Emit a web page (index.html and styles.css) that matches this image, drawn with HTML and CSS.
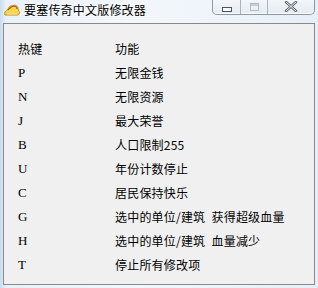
FILE: index.html
```html
<!DOCTYPE html>
<html lang="zh-CN">
<head>
  <meta charset="UTF-8">
  <title>要塞传奇中文版修改器</title>
  <link rel="stylesheet" href="styles.css">
</head>
<body>
  <div class="window">
    <div class="titlebar">
      <svg class="app-icon" width="18" height="15" viewBox="0 0 18 15">
        <path d="M2 13 C1 10 3 8 5 8 C5 5 8 3 10 4 C12 2 16 4 15 8 C17 9 17 12 15 13 Z" fill="#f6d64a" stroke="#c58a1e" stroke-width="1"/>
        <path d="M5 8 C6 6 9 5 10 4 C12 4 14 5 14 7" fill="none" stroke="#b0561a" stroke-width="1.2"/>
        <path d="M4 12 L14 12" stroke="#fbe9a0" stroke-width="1"/>
      </svg>
      <div class="title">要塞传奇中文版修改器</div>
      <div class="caption-buttons">
        <div class="cbtn min"><span class="min-glyph"></span></div>
        <div class="cbtn max"><span class="max-glyph"></span></div>
        <div class="cbtn close">
          <svg width="14" height="11" viewBox="0 0 14 11">
            <path d="M2 1 L12 10 M12 1 L2 10" fill="none" stroke="#5f6a75" stroke-width="2.6" stroke-linecap="round"/>
            <path d="M2 1 L12 10 M12 1 L2 10" fill="none" stroke="#eef2f6" stroke-width="1" stroke-linecap="round"/>
          </svg>
        </div>
      </div>
    </div>

    <div class="client">
      <div class="hotkeys">
        <div class="key head">热键</div><div class="desc head">功能</div>
        <div class="key">P</div><div class="desc">无限金钱</div>
        <div class="key">N</div><div class="desc">无限资源</div>
        <div class="key">J</div><div class="desc">最大荣誉</div>
        <div class="key">B</div><div class="desc">人口限制255</div>
        <div class="key">U</div><div class="desc">年份计数停止</div>
        <div class="key">C</div><div class="desc">居民保持快乐</div>
        <div class="key">G</div><div class="desc">选中的单位/建筑&ensp;获得超级血量</div>
        <div class="key">H</div><div class="desc">选中的单位/建筑&ensp;血量减少</div>
        <div class="key">T</div><div class="desc">停止所有修改项</div>
      </div>
    </div>
  </div>
</body>
</html>
```

FILE: styles.css
```css
html, body {
  margin: 0;
  padding: 0;
}

body {
  width: 318px;
  height: 288px;
  overflow: hidden;
  font-family: "Noto Sans CJK SC", "Noto Sans", sans-serif;
  color: #000;
  background: linear-gradient(90deg, #c9dcef 0px, #e9f1f9 6px, #f3f7fb 40%, #eef4fa 70%, #e6eef7 100%);
}

.window {
  height: 288px;
  display: flex;
  flex-direction: column;
}

.titlebar {
  height: 23px;
  display: flex;
  align-items: flex-start;
}

.app-icon {
  margin: 2px 0 0 3px;
  flex: none;
}

.title {
  margin-left: 3px;
  font-size: 12px;
  line-height: 19px;
  letter-spacing: 0.2px;
  text-shadow: 0 0 6px #fff, 0 0 3px #fff;
}

.caption-buttons {
  margin-left: auto;
  margin-right: 3px;
  display: flex;
  height: 15px;
  margin-top: -1px;
  border: 1px solid #8d99a6;
  border-top: none;
  border-radius: 0 0 5px 5px;
  background: linear-gradient(#f4f7fa, #e4ebf2);
  box-shadow: inset 0 -1px 0 #ffffff;
}

.cbtn {
  height: 15px;
  display: flex;
  align-items: center;
  justify-content: center;
}

.cbtn.min {
  width: 27px;
  border-right: 1px solid #a9b3be;
}

.cbtn.max {
  width: 26px;
  border-right: 1px solid #a9b3be;
}

.cbtn.close {
  width: 46px;
}

.min-glyph {
  width: 8px;
  height: 3px;
  margin-top: 6px;
  border: 1px solid #4d5560;
  background: #fff;
}

.max-glyph {
  width: 7px;
  height: 6px;
  border: 1px solid #b4bcc6;
  outline: 1px solid #e9eef3;
  box-shadow: inset 0 2px 0 #c4ccd5;
}

.client {
  flex: 1;
  margin: 0 3px 3px 3px;
  border: 1px solid #8a8a8a;
  background: #f0f0f0;
}

.hotkeys {
  display: grid;
  grid-template-columns: 97px 1fr;
  padding: 13px 0 0 14px;
  font-size: 12px;
  line-height: 24px;
}

.key {
  font-family: "Liberation Serif", "DejaVu Serif", serif;
  font-size: 13px;
}

.key.head,
.desc {
  font-family: "Noto Sans CJK SC", "Noto Sans", sans-serif;
  font-size: 12px;
  letter-spacing: 0.2px;
}
```
